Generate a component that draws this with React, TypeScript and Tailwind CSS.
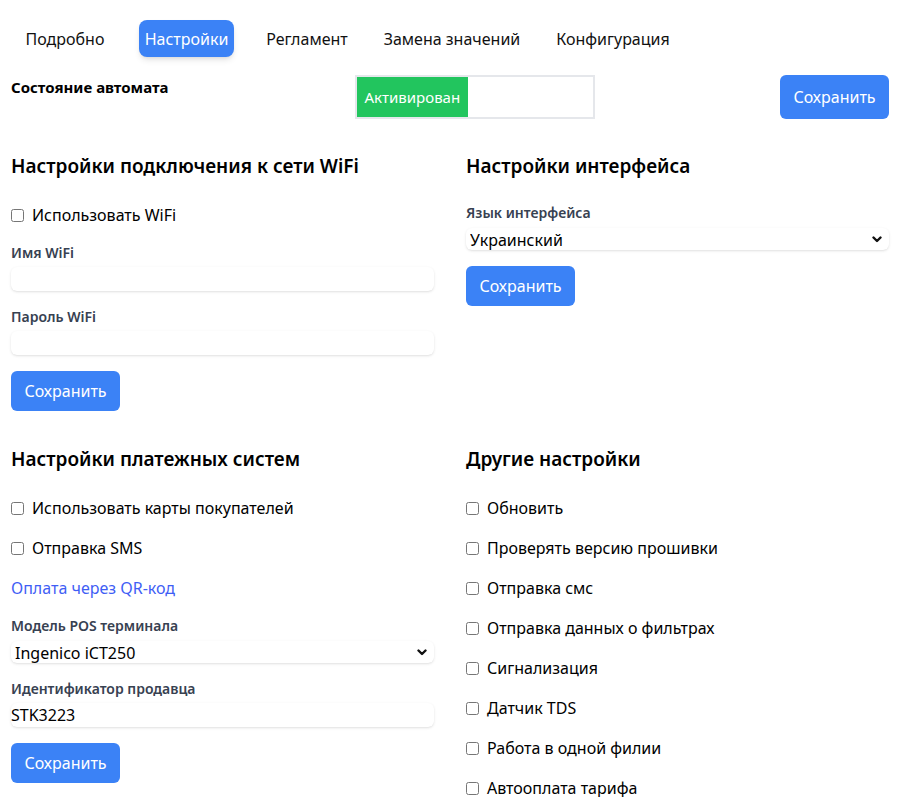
import React from "react";

const tabs = [
  { label: "Подробно", w: "w-[92px]" },
  { label: "Настройки", w: "w-[95px]" },
  { label: "Регламент", w: "w-[90px]" },
  { label: "Замена значений", w: "w-[144px]" },
  { label: "Конфигурация", w: "w-[122px]" },
];

const other = [
  "Обновить",
  "Проверять версию прошивки",
  "Отправка смс",
  "Отправка данных о фильтрах",
  "Сигнализация",
  "Датчик TDS",
  "Работа в одной филии",
  "Автооплата тарифа",
];

function SaveButton() {
  return (
    <button className="self-start h-10 w-[109px] rounded-md bg-[#3b82f6] text-white text-base">
      Сохранить
    </button>
  );
}

function Check({ label }: { label: string }) {
  return (
    <label className="flex items-center gap-2 h-6 text-base leading-6 text-black">
      <input type="checkbox" className="w-[13px] h-[13px] shrink-0" />
      <span>{label}</span>
    </label>
  );
}

function Label({ children }: { children: React.ReactNode }) {
  return <div className="text-sm leading-5 font-semibold text-[#374151]">{children}</div>;
}

function TextInput({ value = "" }: { value?: string }) {
  return (
    <input
      defaultValue={value}
      className="h-6 w-full rounded-md bg-white shadow-sm text-base text-black outline-none"
    />
  );
}

function Select({ value }: { value: string }) {
  return (
    <div className="relative h-[22px] w-full rounded-md bg-white shadow-sm">
      <select className="h-full w-full appearance-none bg-transparent pl-1 text-base leading-[22px] text-black outline-none">
        <option>{value}</option>
      </select>
      <svg
        className="pointer-events-none absolute right-[7px] top-[8px]"
        width="10"
        height="7"
        viewBox="0 0 10 7"
        fill="none"
      >
        <polyline points="1.5,1.5 5,5 8.5,1.5" stroke="#111" strokeWidth="2.4" strokeLinecap="round" strokeLinejoin="round" />
      </svg>
    </div>
  );
}

function Heading({ children }: { children: React.ReactNode }) {
  return <h2 className="text-[19px] leading-7 font-semibold text-black mb-[23px]">{children}</h2>;
}

export default function App() {
  return (
    <div className="min-h-screen bg-white pl-[11px] pr-[13px] pt-5 font-['Noto_Sans',sans-serif] text-black">
      {/* tabs */}
      <div className="flex gap-[28px] pl-2">
        {tabs.map((t) =>
          t.label === "Настройки" ? (
            <button key={t.label} className={`${t.w} h-[37px] rounded-lg bg-[#3b82f6] text-white text-base shadow-md whitespace-nowrap`}>
              {t.label}
            </button>
          ) : (
            <button key={t.label} className={`${t.w} h-[37px] text-base text-[#111] whitespace-nowrap`}>
              {t.label}
            </button>
          )
        )}
      </div>

      {/* status row */}
      <div className="mt-[18px] flex items-start justify-between">
        <div className="w-[158px] text-[15px] leading-6 font-bold">Состояние автомата</div>
        <div className="flex h-11 w-60 border-2 border-[#e5e7eb]">
          <span className="flex items-center whitespace-nowrap bg-[#22c55e] px-2 text-[15px] text-white">
            Активирован
          </span>
        </div>
        <button className="h-11 w-[109px] rounded-md bg-[#3b82f6] text-white text-base">Сохранить</button>
      </div>

      {/* sections */}
      <div className="mt-[33px] grid grid-cols-2 gap-x-8 gap-y-[34px] items-start">
        <section className="flex flex-col">
          <Heading>Настройки подключения к сети WiFi</Heading>
          <div className="flex flex-col gap-4">
            <Check label="Использовать WiFi" />
            <div className="flex flex-col gap-1">
              <Label>Имя WiFi</Label>
              <TextInput />
            </div>
            <div className="flex flex-col gap-1">
              <Label>Пароль WiFi</Label>
              <TextInput />
            </div>
            <SaveButton />
          </div>
        </section>

        <section className="flex flex-col">
          <Heading>Настройки интерфейса</Heading>
          <div className="flex flex-col gap-4">
            <div className="flex flex-col gap-[5px]">
              <Label>Язык интерфейса</Label>
              <Select value="Украинский" />
            </div>
            <SaveButton />
          </div>
        </section>

        <section className="flex flex-col">
          <Heading>Настройки платежных систем</Heading>
          <div className="flex flex-col gap-4">
            <Check label="Использовать карты покупателей" />
            <Check label="Отправка SMS" />
            <a href="#" className="h-6 leading-6 text-base text-[#3f5ef5]">
              Оплата через QR-код
            </a>
            <div className="flex flex-col gap-[5px]">
              <Label>Модель POS терминала</Label>
              <Select value="Ingenico iCT250" />
            </div>
            <div className="flex flex-col gap-1">
              <Label>Идентификатор продавца</Label>
              <TextInput value="STK3223" />
            </div>
            <SaveButton />
          </div>
        </section>

        <section className="flex flex-col">
          <Heading>Другие настройки</Heading>
          <div className="flex flex-col gap-4 pb-4">
            {other.map((o) => (
              <Check key={o} label={o} />
            ))}
          </div>
        </section>
      </div>
    </div>
  );
}
